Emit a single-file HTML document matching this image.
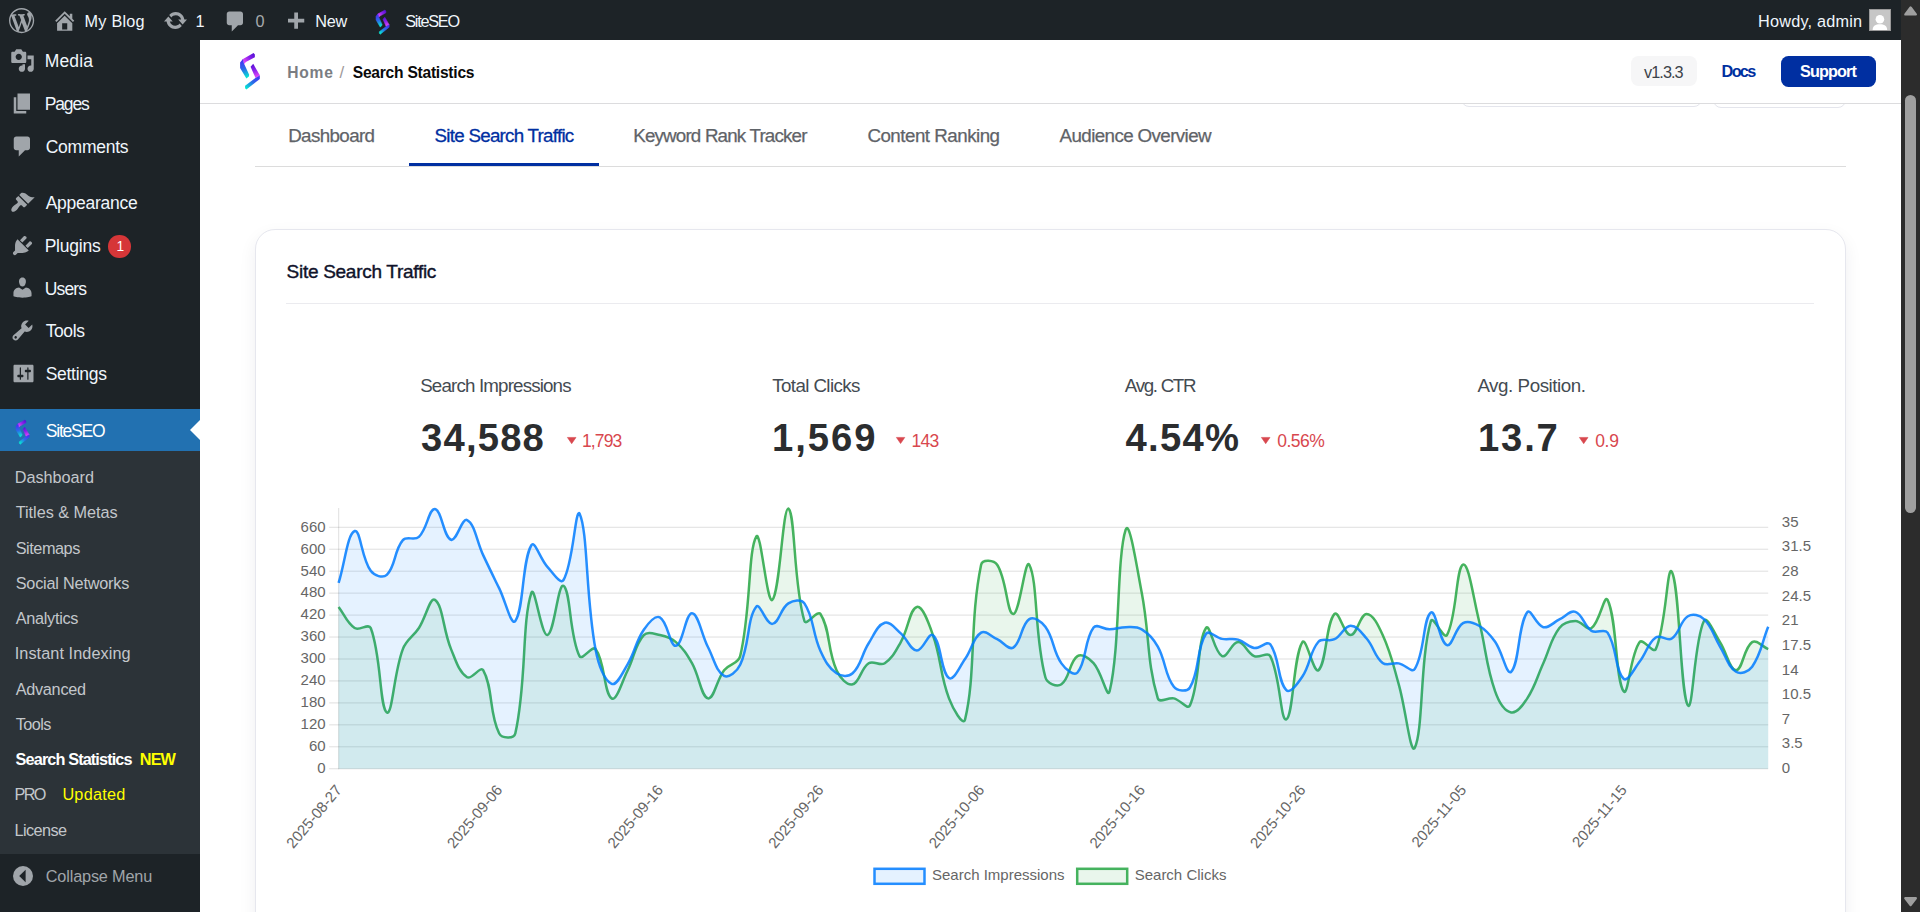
<!DOCTYPE html>
<html><head><meta charset="utf-8"><title>Search Statistics</title>
<style>
*{box-sizing:border-box}
html,body{margin:0;padding:0;width:1920px;height:912px;overflow:hidden;background:#fff;font-family:"Liberation Sans", sans-serif;}
.t{position:absolute;white-space:nowrap;display:block}
.abs{position:absolute}
svg{position:absolute;overflow:visible}
</style></head>
<body>
<div id="wp-chrome">
<div class="abs" style="left:0;top:0;width:1920px;height:40px;background:#1d2327"></div>
<div class="abs" style="left:0;top:40px;width:200px;height:872px;background:#1d2327"></div>
<div class="abs" style="left:0;top:408.8px;width:200px;height:42.2px;background:#2271b1"></div>
<div class="abs" style="left:0;top:451px;width:200px;height:403px;background:#2c3338"></div>
<svg style="left:190px;top:420px" width="10" height="20" viewBox="0 0 10 20"><path d="M10 0 L0 10 L10 20 Z" fill="#fff"/></svg>
<svg style="left:8.80px;top:8.00px" width="25.20" height="25.20" viewBox="0 0 20 20"><path fill="#a0a5aa" d="M20 10c0-5.51-4.49-10-10-10C4.48 0 0 4.49 0 10c0 5.52 4.48 10 10 10 5.51 0 10-4.48 10-10zM7.78 15.37L4.37 6.22c.55-.02 1.17-.08 1.17-.08.5-.06.44-1.13-.06-1.11 0 0-1.45.11-2.37.11-.18 0-.37 0-.58-.01C4.12 2.69 6.87 1.11 10 1.11c2.33 0 4.45.87 6.05 2.34-.68-.11-1.65.39-1.65 1.58 0 .74.45 1.36.9 2.1.35.61.55 1.36.55 2.46 0 1.49-1.4 5-1.4 5l-3.03-8.37c.54-.02.82-.17.82-.17.5-.05.44-1.25-.06-1.22 0 0-1.44.12-2.38.12-.87 0-2.33-.12-2.33-.12-.5-.03-.56 1.2-.06 1.22l.92.08 1.26 3.41zM17.41 10c.24-.64.74-1.87.43-4.25.7 1.29 1.05 2.71 1.05 4.25 0 3.29-1.73 6.24-4.4 7.78.97-2.59 1.94-5.2 2.92-7.78zM6.1 18.09C3.12 16.65 1.11 13.53 1.11 10c0-1.3.23-2.48.72-3.59C3.25 10.3 4.67 14.2 6.1 18.09zm4.03-6.63l2.58 6.98c-.86.29-1.76.45-2.71.45-.79 0-1.57-.11-2.29-.33.81-2.38 1.62-4.74 2.42-7.1z"/></svg>
<svg style="left:52.00px;top:7.70px" width="25.40" height="25.40" viewBox="0 0 20 20"><path fill="#a0a5aa" d="M16 8.5l1.53 1.53-1.06 1.06L10 4.62l-6.47 6.47-1.06-1.06L10 2.5l4 4v-2h2v4zm-6-2.46l6 5.99V18H4v-5.970zM12 17v-5H8v5h4z"/></svg>
<span class="t" style="left:84.60px;top:13.00px;font-size:16.25px;line-height:16.25px;font-weight:400;color:#f0f6fc;letter-spacing:0.223px;">My Blog</span>
<svg style="left:162.50px;top:7.80px" width="25.00" height="25.00" viewBox="0 0 20 20"><path fill="#a0a5aa" d="M10.2 3.28c3.53 0 6.43 2.61 6.92 6h2.08l-3.5 4-3.5-4h2.32c-.45-1.97-2.21-3.45-4.32-3.45-1.45 0-2.73.71-3.54 1.78L4.95 5.66C6.23 4.2 8.11 3.28 10.2 3.28zm-.4 13.44c-3.52 0-6.43-2.61-6.92-6H.8l3.5-4c1.17 1.33 2.33 2.67 3.5 4H5.48c.45 1.97 2.21 3.45 4.32 3.45 1.45 0 2.73-.71 3.54-1.78l1.71 1.95c-1.28 1.46-3.15 2.38-5.25 2.38z"/></svg>
<span class="t" style="left:195.50px;top:13.00px;font-size:16.25px;line-height:16.25px;font-weight:400;color:#f0f6fc;letter-spacing:0.000px;">1</span>
<svg style="left:222.50px;top:9.00px" width="25.00" height="25.00" viewBox="0 0 20 20"><path fill="#a0a5aa" d="M5 2h9c1.1 0 2 .9 2 2v7c0 1.1-.9 2-2 2h-2l-5 5v-5H5c-1.1 0-2-.9-2-2V4c0-1.1.9-2 2-2z"/></svg>
<span class="t" style="left:255.60px;top:13.00px;font-size:16.25px;line-height:16.25px;font-weight:400;color:#a7aaad;letter-spacing:0.000px;">0</span>
<svg style="left:283.00px;top:10.10px" width="25.00" height="25.00" viewBox="0 0 20 20"><path fill="#a0a5aa" d="M17 7v3h-5v5H9v-5H4V7h5V2h3v5h5z"/></svg>
<span class="t" style="left:315.20px;top:13.00px;font-size:16.25px;line-height:16.25px;font-weight:400;color:#f0f6fc;letter-spacing:-0.186px;">New</span>
<svg style="left:375.80px;top:10.20px" width="13.21" height="24.30" viewBox="0 0 20 36.8"><defs><linearGradient id="lg1a" gradientUnits="userSpaceOnUse" x1="14.5" y1="1" x2="3.5" y2="10"><stop offset="0" stop-color="#5410d4"/><stop offset="0.45" stop-color="#8a22ec"/><stop offset="1" stop-color="#ee4cf8"/></linearGradient><linearGradient id="lg1b" gradientUnits="userSpaceOnUse" x1="1" y1="7" x2="7" y2="25"><stop offset="0" stop-color="#4a2af5"/><stop offset="0.5" stop-color="#2a6ce8"/><stop offset="1" stop-color="#04efd2"/></linearGradient><linearGradient id="lg1c" gradientUnits="userSpaceOnUse" x1="12" y1="11" x2="17.5" y2="25"><stop offset="0" stop-color="#5410d4"/><stop offset="0.45" stop-color="#8a22ec"/><stop offset="1" stop-color="#ee4cf8"/></linearGradient><linearGradient id="lg1d" gradientUnits="userSpaceOnUse" x1="19.5" y1="23" x2="6" y2="36"><stop offset="0" stop-color="#4a2af5"/><stop offset="0.5" stop-color="#2a6ce8"/><stop offset="1" stop-color="#04efd2"/></linearGradient></defs><path d="M13.6 0.1 L14.9 1.6 L14.9 4.3 L5.9 9 L4.2 11 L2.6 6.2 Z" fill="url(#lg1a)" stroke="url(#lg1a)" stroke-width="0.90" stroke-linejoin="round"/><path d="M2.9 5.9 L0.1 9.5 L0.1 15 L6.4 25.7 L8.9 23.5 L9.2 21.9 L4 10.6 Z" fill="url(#lg1b)" stroke="url(#lg1b)" stroke-width="0.90" stroke-linejoin="round"/><path d="M13.3 10.9 L10.6 13.9 L15.6 25.2 L19.9 22.9 L19.6 21.9 Z" fill="url(#lg1c)" stroke="url(#lg1c)" stroke-width="0.90" stroke-linejoin="round"/><path d="M19.9 22.6 L19.9 26 L6.4 36.7 L5.1 35.3 L5.1 32.8 L15.8 24.8 Z" fill="url(#lg1d)" stroke="url(#lg1d)" stroke-width="0.90" stroke-linejoin="round"/></svg>
<span class="t" style="left:405.30px;top:13.00px;font-size:16.25px;line-height:16.25px;font-weight:400;color:#f0f6fc;letter-spacing:-1.263px;">SiteSEO</span>
<span class="t" style="left:1758.00px;top:13.00px;font-size:16.25px;line-height:16.25px;font-weight:400;color:#f0f6fc;letter-spacing:0.208px;">Howdy, admin</span>
<div class="abs" style="left:1869px;top:9px;width:22px;height:22px;background:#c6c6c6;border:1px solid #9a9a9a"></div>
<svg style="left:1870px;top:10px" width="20" height="20" viewBox="0 0 20 20"><circle cx="9.9" cy="9.2" r="4.3" fill="#fff"/><path d="M2.6 20 C2.8 15.6 5.6 14.2 9.9 14.2 C14.2 14.2 17 15.6 17.2 20 Z" fill="#fff"/></svg>
<svg style="left:10.00px;top:47.70px" width="25.00" height="25.00" viewBox="0 0 20 20"><path fill="#a0a5aa" d="M13 11V4c0-.55-.45-1-1-1h-1.670L9 1H5L3.670 3H2c-.55 0-1 .45-1 1v7c0 .55.45 1 1 1h10c.55 0 1-.45 1-1zM7 4.500c1.380 0 2.500 1.120 2.500 2.500S8.380 9.500 7 9.500 4.500 8.380 4.500 7 5.620 4.500 7 4.500zM14 6h5v10.500c0 1.380-1.120 2.500-2.500 2.500S14 17.880 14 16.500s1.120-2.500 2.500-2.500c.17 0 .34.02.5.05V9h-3V6zm-4 8.050V13h2v3.500c0 1.380-1.120 2.500-2.500 2.500S7 17.880 7 16.500 8.120 14 9.500 14c.17 0 .34.02.5.05z"/></svg>
<span class="t" style="left:44.70px;top:53.00px;font-size:17.50px;line-height:17.50px;font-weight:400;color:#f0f6fc;letter-spacing:0.142px;">Media</span>
<svg style="left:10.00px;top:91.00px" width="25.00" height="25.00" viewBox="0 0 20 20"><path fill="#a0a5aa" d="M6 15V2h10v13H6zm-1 1h8v2H3V5h2v11z"/></svg>
<span class="t" style="left:44.70px;top:96.00px;font-size:17.50px;line-height:17.50px;font-weight:400;color:#f0f6fc;letter-spacing:-1.118px;">Pages</span>
<svg style="left:10.00px;top:133.50px" width="25.00" height="25.00" viewBox="0 0 20 20"><path fill="#a0a5aa" d="M5 2h9c1.1 0 2 .9 2 2v7c0 1.1-.9 2-2 2h-2l-5 5v-5H5c-1.1 0-2-.9-2-2V4c0-1.1.9-2 2-2z"/></svg>
<span class="t" style="left:45.70px;top:139.00px;font-size:17.50px;line-height:17.50px;font-weight:400;color:#f0f6fc;letter-spacing:-0.250px;">Comments</span>
<svg style="left:10.00px;top:189.60px" width="25.00" height="25.00" viewBox="0 0 20 20"><path fill="#a0a5aa" d="M14.48 11.06L7.41 3.99l1.5-1.5c.5-.56 2.3-.47 3.51.32 1.21.8 1.43 1.28 2.91 2.1 1.18.64 2.45 1.26 4.45.85zm-.71.71L6.7 4.7 4.93 6.47c-.39.39-.39 1.02 0 1.41l1.06 1.06c.39.39.39 1.03 0 1.42-.6.6-1.43 1.11-2.21 1.69-.35.26-.7.53-1.01.84C1.43 14.23.4 16.08 1.4 17.07c.99 1 2.84-.03 4.18-1.36.31-.31.58-.66.85-1.02.57-.78 1.08-1.61 1.69-2.21.39-.39 1.02-.39 1.41 0l1.06 1.06c.39.39 1.02.39 1.41 0z"/></svg>
<span class="t" style="left:45.70px;top:195.00px;font-size:17.50px;line-height:17.50px;font-weight:400;color:#f0f6fc;letter-spacing:-0.261px;">Appearance</span>
<svg style="left:10.00px;top:233.40px" width="25.00" height="25.00" viewBox="0 0 20 20"><path fill="#a0a5aa" d="M13.11 4.36L9.87 7.6 8 5.73l3.24-3.24c.35-.34 1.05-.2 1.56.32.52.51.66 1.21.31 1.55zm-8 1.77l.91-1.12 9.01 9.01-1.19.84c-.71.71-2.63 1.16-3.82 1.16H6.14L4.9 17.26c-.59.59-1.54.59-2.12 0-.59-.58-.59-1.53 0-2.12l1.24-1.24v-3.88c0-1.13.4-3.19 1.09-3.89zm7.26 3.97l3.24-3.24c.34-.35 1.04-.21 1.55.31.52.51.66 1.21.31 1.55l-3.24 3.250z"/></svg>
<span class="t" style="left:44.70px;top:238.00px;font-size:17.50px;line-height:17.50px;font-weight:400;color:#f0f6fc;letter-spacing:-0.241px;">Plugins</span>
<svg style="left:10.00px;top:274.90px" width="25.00" height="25.00" viewBox="0 0 20 20"><path fill="#a0a5aa" d="M10 9.25c-2.27 0-2.73-3.44-2.73-3.44C7 4.02 7.82 2 9.97 2c2.16 0 2.98 2.02 2.71 3.81 0 0-.41 3.44-2.68 3.44zm0 2.57L12.72 10c2.39 0 4.52 2.33 4.52 4.53v2.49s-3.65 1.13-7.24 1.13c-3.65 0-7.24-1.13-7.24-1.13v-2.49c0-2.25 1.94-4.48 4.47-4.48z"/></svg>
<span class="t" style="left:44.70px;top:281.00px;font-size:17.50px;line-height:17.50px;font-weight:400;color:#f0f6fc;letter-spacing:-0.837px;">Users</span>
<svg style="left:10.00px;top:317.90px" width="25.00" height="25.00" viewBox="0 0 20 20"><path fill="#a0a5aa" d="M16.68 9.77c-1.34 1.34-3.3 1.67-4.95.99l-5.41 6.52c-.99.99-2.59.99-3.58 0s-.99-2.59 0-3.57l6.52-5.42c-.68-1.65-.35-3.61.99-4.95 1.28-1.28 3.12-1.62 4.72-1.06l-2.89 2.89 2.82 2.82 2.86-2.87c.53 1.58.18 3.39-1.08 4.65zM3.81 16.21c.4.39 1.04.39 1.43 0 .4-.4.4-1.04 0-1.43-.39-.4-1.03-.4-1.43 0-.39.39-.39 1.03 0 1.43z"/></svg>
<span class="t" style="left:45.70px;top:323.00px;font-size:17.50px;line-height:17.50px;font-weight:400;color:#f0f6fc;letter-spacing:-0.401px;">Tools</span>
<svg style="left:10.70px;top:361.00px" width="25.00" height="25.00" viewBox="0 0 20 20"><path fill="#a0a5aa" d="M18 16V4c0-.55-.45-1-1-1H3c-.55 0-1 .45-1 1v12c0 .55.45 1 1 1h14c.55 0 1-.45 1-1zM8 11h1c.55 0 1 .45 1 1s-.45 1-1 1H8v1.500c0 .28-.22.5-.5.5s-.5-.22-.5-.5V13H6c-.55 0-1-.45-1-1s.45-1 1-1h1V5.500c0-.28.22-.5.5-.5s.5.22.5.5V11zm5-2h-1c-.55 0-1-.45-1-1s.45-1 1-1h1V5.500c0-.28.22-.5.5-.5s.5.22.5.5V7h1c.55 0 1 .45 1 1s-.45 1-1 1h-1v5.500c0 .28-.22.5-.5.5s-.5-.22-.5-.5V9z"/></svg>
<span class="t" style="left:45.70px;top:366.00px;font-size:17.50px;line-height:17.50px;font-weight:400;color:#f0f6fc;letter-spacing:-0.283px;">Settings</span>
<div class="abs" style="left:108px;top:235.4px;width:22.5px;height:22.5px;border-radius:50%;background:#d63638"></div>
<span class="t" style="left:116.50px;top:240.00px;font-size:13.75px;line-height:13.75px;font-weight:400;color:#fff;letter-spacing:0.000px;">1</span>
<svg style="left:16.40px;top:419.80px" width="13.21" height="24.30" viewBox="0 0 20 36.8"><defs><linearGradient id="lg2a" gradientUnits="userSpaceOnUse" x1="14.5" y1="1" x2="3.5" y2="10"><stop offset="0" stop-color="#5410d4"/><stop offset="0.45" stop-color="#8a22ec"/><stop offset="1" stop-color="#ee4cf8"/></linearGradient><linearGradient id="lg2b" gradientUnits="userSpaceOnUse" x1="1" y1="7" x2="7" y2="25"><stop offset="0" stop-color="#4a2af5"/><stop offset="0.5" stop-color="#2a6ce8"/><stop offset="1" stop-color="#04efd2"/></linearGradient><linearGradient id="lg2c" gradientUnits="userSpaceOnUse" x1="12" y1="11" x2="17.5" y2="25"><stop offset="0" stop-color="#5410d4"/><stop offset="0.45" stop-color="#8a22ec"/><stop offset="1" stop-color="#ee4cf8"/></linearGradient><linearGradient id="lg2d" gradientUnits="userSpaceOnUse" x1="19.5" y1="23" x2="6" y2="36"><stop offset="0" stop-color="#4a2af5"/><stop offset="0.5" stop-color="#2a6ce8"/><stop offset="1" stop-color="#04efd2"/></linearGradient></defs><path d="M13.6 0.1 L14.9 1.6 L14.9 4.3 L5.9 9 L4.2 11 L2.6 6.2 Z" fill="url(#lg2a)" stroke="url(#lg2a)" stroke-width="0.90" stroke-linejoin="round"/><path d="M2.9 5.9 L0.1 9.5 L0.1 15 L6.4 25.7 L8.9 23.5 L9.2 21.9 L4 10.6 Z" fill="url(#lg2b)" stroke="url(#lg2b)" stroke-width="0.90" stroke-linejoin="round"/><path d="M13.3 10.9 L10.6 13.9 L15.6 25.2 L19.9 22.9 L19.6 21.9 Z" fill="url(#lg2c)" stroke="url(#lg2c)" stroke-width="0.90" stroke-linejoin="round"/><path d="M19.9 22.6 L19.9 26 L6.4 36.7 L5.1 35.3 L5.1 32.8 L15.8 24.8 Z" fill="url(#lg2d)" stroke="url(#lg2d)" stroke-width="0.90" stroke-linejoin="round"/></svg>
<span class="t" style="left:45.80px;top:423.00px;font-size:17.50px;line-height:17.50px;font-weight:400;color:#fff;letter-spacing:-1.217px;">SiteSEO</span>
<span class="t" style="left:14.70px;top:469.00px;font-size:16.25px;line-height:16.25px;font-weight:400;color:#c3c7cb;letter-spacing:-0.020px;">Dashboard</span>
<span class="t" style="left:15.70px;top:504.00px;font-size:16.25px;line-height:16.25px;font-weight:400;color:#c3c7cb;letter-spacing:-0.024px;">Titles &amp; Metas</span>
<span class="t" style="left:15.70px;top:540.00px;font-size:16.25px;line-height:16.25px;font-weight:400;color:#c3c7cb;letter-spacing:-0.445px;">Sitemaps</span>
<span class="t" style="left:15.70px;top:575.00px;font-size:16.25px;line-height:16.25px;font-weight:400;color:#c3c7cb;letter-spacing:-0.205px;">Social Networks</span>
<span class="t" style="left:15.70px;top:610.00px;font-size:16.25px;line-height:16.25px;font-weight:400;color:#c3c7cb;letter-spacing:-0.287px;">Analytics</span>
<span class="t" style="left:14.70px;top:645.00px;font-size:16.25px;line-height:16.25px;font-weight:400;color:#c3c7cb;letter-spacing:0.074px;">Instant Indexing</span>
<span class="t" style="left:15.70px;top:681.00px;font-size:16.25px;line-height:16.25px;font-weight:400;color:#c3c7cb;letter-spacing:-0.277px;">Advanced</span>
<span class="t" style="left:15.70px;top:716.00px;font-size:16.25px;line-height:16.25px;font-weight:400;color:#c3c7cb;letter-spacing:-0.578px;">Tools</span>
<span class="t" style="left:15.60px;top:751.00px;font-size:16.25px;line-height:16.25px;font-weight:700;color:#fff;letter-spacing:-0.877px;">Search Statistics</span>
<span class="t" style="left:139.80px;top:751.00px;font-size:16.25px;line-height:16.25px;font-weight:700;color:#ffff00;letter-spacing:-0.887px;">NEW</span>
<span class="t" style="left:14.60px;top:786.00px;font-size:16.25px;line-height:16.25px;font-weight:400;color:#c3c7cb;letter-spacing:-1.737px;">PRO</span>
<span class="t" style="left:62.40px;top:786.00px;font-size:16.25px;line-height:16.25px;font-weight:400;color:#ffff00;letter-spacing:0.233px;">Updated</span>
<span class="t" style="left:14.60px;top:822.00px;font-size:16.25px;line-height:16.25px;font-weight:400;color:#c3c7cb;letter-spacing:-0.595px;">License</span>
<svg style="left:12.5px;top:865.7px" width="20" height="20" viewBox="0 0 20 20"><circle cx="10" cy="10" r="10" fill="#a0a5aa"/><path d="M12.6 3.8 L6.2 10 L12.6 16.2 Z" fill="#1d2327"/></svg>
<span class="t" style="left:45.80px;top:868.00px;font-size:16.25px;line-height:16.25px;font-weight:400;color:#a0a5aa;letter-spacing:-0.163px;">Collapse Menu</span>
<div class="abs" style="left:1901px;top:0;width:19px;height:912px;background:#2c2c2c"></div>
<div class="abs" style="left:1905px;top:95px;width:11px;height:418px;border-radius:5.5px;background:#9f9f9f"></div>
<svg style="left:1901px;top:0" width="19" height="912" viewBox="0 0 19 912"><path d="M9.6 7.6 L14.8 14.4 L4.4 14.4 Z" fill="#9f9f9f" stroke="#9f9f9f" stroke-width="2.4" stroke-linejoin="round"/><path d="M9.6 905 L14.8 898.2 L4.4 898.2 Z" fill="#9f9f9f" stroke="#9f9f9f" stroke-width="2.4" stroke-linejoin="round"/></svg>
</div>
<main id="siteseo-main">
<div class="abs" style="left:1461px;top:80px;width:241px;height:27px;border:1.25px solid #e4e5ec;border-radius:8px;background:#fff"></div>
<div class="abs" style="left:1713px;top:80px;width:132.5px;height:28px;border:1.25px solid #e4e5ec;border-radius:8px;background:#fff"></div>
<div class="abs" style="left:200px;top:40px;width:1701px;height:63.8px;background:#fff;border-bottom:1.25px solid #dcdcde"></div>
<svg style="left:240.10px;top:53.10px" width="19.95" height="36.70" viewBox="0 0 20 36.8"><defs><linearGradient id="lg3a" gradientUnits="userSpaceOnUse" x1="14.5" y1="1" x2="3.5" y2="10"><stop offset="0" stop-color="#5410d4"/><stop offset="0.45" stop-color="#8a22ec"/><stop offset="1" stop-color="#ee4cf8"/></linearGradient><linearGradient id="lg3b" gradientUnits="userSpaceOnUse" x1="1" y1="7" x2="7" y2="25"><stop offset="0" stop-color="#4a2af5"/><stop offset="0.5" stop-color="#2a6ce8"/><stop offset="1" stop-color="#04efd2"/></linearGradient><linearGradient id="lg3c" gradientUnits="userSpaceOnUse" x1="12" y1="11" x2="17.5" y2="25"><stop offset="0" stop-color="#5410d4"/><stop offset="0.45" stop-color="#8a22ec"/><stop offset="1" stop-color="#ee4cf8"/></linearGradient><linearGradient id="lg3d" gradientUnits="userSpaceOnUse" x1="19.5" y1="23" x2="6" y2="36"><stop offset="0" stop-color="#4a2af5"/><stop offset="0.5" stop-color="#2a6ce8"/><stop offset="1" stop-color="#04efd2"/></linearGradient></defs><path d="M13.6 0.1 L14.9 1.6 L14.9 4.3 L5.9 9 L4.2 11 L2.6 6.2 Z" fill="url(#lg3a)" stroke="url(#lg3a)" stroke-width="0.00" stroke-linejoin="round"/><path d="M2.9 5.9 L0.1 9.5 L0.1 15 L6.4 25.7 L8.9 23.5 L9.2 21.9 L4 10.6 Z" fill="url(#lg3b)" stroke="url(#lg3b)" stroke-width="0.00" stroke-linejoin="round"/><path d="M13.3 10.9 L10.6 13.9 L15.6 25.2 L19.9 22.9 L19.6 21.9 Z" fill="url(#lg3c)" stroke="url(#lg3c)" stroke-width="0.00" stroke-linejoin="round"/><path d="M19.9 22.6 L19.9 26 L6.4 36.7 L5.1 35.3 L5.1 32.8 L15.8 24.8 Z" fill="url(#lg3d)" stroke="url(#lg3d)" stroke-width="0.00" stroke-linejoin="round"/></svg>
<span class="t" style="left:287.30px;top:65.00px;font-size:15.60px;line-height:15.60px;font-weight:700;color:#7a7d82;letter-spacing:0.749px;">Home</span>
<span class="t" style="left:339.60px;top:64.00px;font-size:17.00px;line-height:17.00px;font-weight:400;color:#a09a9a;letter-spacing:0.000px;">/</span>
<span class="t" style="left:352.80px;top:65.00px;font-size:15.60px;line-height:15.60px;font-weight:700;color:#0a0a0a;letter-spacing:-0.250px;">Search Statistics</span>
<div class="abs" style="left:1631.2px;top:56.2px;width:66px;height:29.8px;border-radius:7.5px;background:#f6f6f7"></div>
<span class="t" style="left:1644.00px;top:64.00px;font-size:16.25px;line-height:16.25px;font-weight:400;color:#3c434a;letter-spacing:-0.926px;">v1.3.3</span>
<span class="t" style="left:1721.60px;top:63.00px;font-size:16.25px;line-height:16.25px;font-weight:700;color:#00309f;letter-spacing:-1.700px;">Docs</span>
<div class="abs" style="left:1781px;top:56.2px;width:95px;height:30.5px;border-radius:7.5px;background:#002fa1"></div>
<span class="t" style="left:1800.00px;top:63.00px;font-size:16.25px;line-height:16.25px;font-weight:700;color:#fff;letter-spacing:-0.911px;">Support</span>
<div class="abs" style="left:255px;top:166px;width:1591px;height:1px;background:#dcdcdc"></div>
<div class="abs" style="left:409px;top:163px;width:189.6px;height:3px;background:#002fa1"></div>
<span class="t" style="left:288.20px;top:127.00px;font-size:18.75px;line-height:18.75px;font-weight:400;color:#5f6368;letter-spacing:-0.612px;-webkit-text-stroke:0.25px #5f6368;">Dashboard</span>
<span class="t" style="left:434.60px;top:127.00px;font-size:18.75px;line-height:18.75px;font-weight:400;color:#002fa1;letter-spacing:-0.734px;-webkit-text-stroke:0.3px #002fa1;">Site Search Traffic</span>
<span class="t" style="left:633.20px;top:127.00px;font-size:18.75px;line-height:18.75px;font-weight:400;color:#5f6368;letter-spacing:-0.808px;-webkit-text-stroke:0.25px #5f6368;">Keyword Rank Tracker</span>
<span class="t" style="left:867.40px;top:127.00px;font-size:18.75px;line-height:18.75px;font-weight:400;color:#5f6368;letter-spacing:-0.503px;-webkit-text-stroke:0.25px #5f6368;">Content Ranking</span>
<span class="t" style="left:1059.60px;top:127.00px;font-size:18.75px;line-height:18.75px;font-weight:400;color:#5f6368;letter-spacing:-0.600px;-webkit-text-stroke:0.25px #5f6368;">Audience Overview</span>
<div class="abs" style="left:255.4px;top:229.4px;width:1590.6px;height:720px;border:1.25px solid #e6e7ee;border-radius:20px;background:#fff;box-shadow:0 7px 18px rgba(30,30,60,0.065)"></div>
<span class="t" style="left:286.60px;top:262.00px;font-size:19.00px;line-height:19.00px;font-weight:400;color:#10132a;letter-spacing:-0.285px;-webkit-text-stroke:0.4px #10132a;">Site Search Traffic</span>
<div class="abs" style="left:286px;top:303px;width:1528px;height:1px;background:#ebebef"></div>
<span class="t" style="left:420.20px;top:377.00px;font-size:18.75px;line-height:18.75px;font-weight:400;color:#444b52;letter-spacing:-0.842px;">Search Impressions</span>
<span class="t" style="left:421.00px;top:419.00px;font-size:38.20px;line-height:38.20px;font-weight:700;color:#2b2d2f;letter-spacing:1.208px;">34,588</span>
<svg style="left:566.80px;top:436.90px" width="9.40" height="7.05" viewBox="0 0 10 7.2"><path d="M0.4 0.3 L9.6 0.3 L5 7 Z" fill="#d8474e" stroke="#d8474e" stroke-width="0.6" stroke-linejoin="round"/></svg>
<span class="t" style="left:582.00px;top:433.00px;font-size:17.50px;line-height:17.50px;font-weight:400;color:#d8474e;letter-spacing:-0.890px;">1,793</span>
<span class="t" style="left:772.20px;top:377.00px;font-size:18.75px;line-height:18.75px;font-weight:400;color:#444b52;letter-spacing:-0.603px;">Total Clicks</span>
<span class="t" style="left:772.00px;top:419.00px;font-size:38.20px;line-height:38.20px;font-weight:700;color:#2b2d2f;letter-spacing:1.969px;">1,569</span>
<svg style="left:896.40px;top:436.90px" width="9.20" height="6.90" viewBox="0 0 10 7.2"><path d="M0.4 0.3 L9.6 0.3 L5 7 Z" fill="#d8474e" stroke="#d8474e" stroke-width="0.6" stroke-linejoin="round"/></svg>
<span class="t" style="left:911.60px;top:433.00px;font-size:17.50px;line-height:17.50px;font-weight:400;color:#d8474e;letter-spacing:-0.733px;">143</span>
<span class="t" style="left:1124.80px;top:377.00px;font-size:18.75px;line-height:18.75px;font-weight:400;color:#444b52;letter-spacing:-1.312px;">Avg. CTR</span>
<span class="t" style="left:1125.40px;top:419.00px;font-size:38.20px;line-height:38.20px;font-weight:700;color:#2b2d2f;letter-spacing:1.319px;">4.54%</span>
<svg style="left:1260.60px;top:436.90px" width="9.40" height="7.05" viewBox="0 0 10 7.2"><path d="M0.4 0.3 L9.6 0.3 L5 7 Z" fill="#d8474e" stroke="#d8474e" stroke-width="0.6" stroke-linejoin="round"/></svg>
<span class="t" style="left:1277.20px;top:433.00px;font-size:17.50px;line-height:17.50px;font-weight:400;color:#d8474e;letter-spacing:-0.515px;">0.56%</span>
<span class="t" style="left:1477.40px;top:377.00px;font-size:18.75px;line-height:18.75px;font-weight:400;color:#444b52;letter-spacing:-0.438px;">Avg. Position.</span>
<span class="t" style="left:1478.00px;top:419.00px;font-size:38.20px;line-height:38.20px;font-weight:700;color:#2b2d2f;letter-spacing:1.838px;">13.7</span>
<svg style="left:1578.80px;top:436.90px" width="9.40" height="7.05" viewBox="0 0 10 7.2"><path d="M0.4 0.3 L9.6 0.3 L5 7 Z" fill="#d8474e" stroke="#d8474e" stroke-width="0.6" stroke-linejoin="round"/></svg>
<span class="t" style="left:1595.20px;top:433.00px;font-size:17.50px;line-height:17.50px;font-weight:400;color:#d8474e;letter-spacing:-0.297px;">0.9</span>
</main>
<section id="traffic-chart">
<svg style="left:0;top:0" width="1920" height="912" viewBox="0 0 1920 912" font-family='"Liberation Sans", sans-serif' font-size="15" fill="#666">
<rect x="329.2" y="768.08" width="1439.00" height="1.25" fill="rgba(0,0,0,0.1)"/>
<text x="325.6" y="773.00" text-anchor="end">0</text>
<rect x="329.2" y="746.13" width="1439.00" height="1.25" fill="rgba(0,0,0,0.1)"/>
<text x="325.6" y="751.06" text-anchor="end">60</text>
<rect x="329.2" y="724.19" width="1439.00" height="1.25" fill="rgba(0,0,0,0.1)"/>
<text x="325.6" y="729.12" text-anchor="end">120</text>
<rect x="329.2" y="702.25" width="1439.00" height="1.25" fill="rgba(0,0,0,0.1)"/>
<text x="325.6" y="707.17" text-anchor="end">180</text>
<rect x="329.2" y="680.31" width="1439.00" height="1.25" fill="rgba(0,0,0,0.1)"/>
<text x="325.6" y="685.23" text-anchor="end">240</text>
<rect x="329.2" y="658.37" width="1439.00" height="1.25" fill="rgba(0,0,0,0.1)"/>
<text x="325.6" y="663.29" text-anchor="end">300</text>
<rect x="329.2" y="636.42" width="1439.00" height="1.25" fill="rgba(0,0,0,0.1)"/>
<text x="325.6" y="641.35" text-anchor="end">360</text>
<rect x="329.2" y="614.48" width="1439.00" height="1.25" fill="rgba(0,0,0,0.1)"/>
<text x="325.6" y="619.41" text-anchor="end">420</text>
<rect x="329.2" y="592.54" width="1439.00" height="1.25" fill="rgba(0,0,0,0.1)"/>
<text x="325.6" y="597.46" text-anchor="end">480</text>
<rect x="329.2" y="570.60" width="1439.00" height="1.25" fill="rgba(0,0,0,0.1)"/>
<text x="325.6" y="575.52" text-anchor="end">540</text>
<rect x="329.2" y="548.65" width="1439.00" height="1.25" fill="rgba(0,0,0,0.1)"/>
<text x="325.6" y="553.58" text-anchor="end">600</text>
<rect x="329.2" y="526.71" width="1439.00" height="1.25" fill="rgba(0,0,0,0.1)"/>
<text x="325.6" y="531.64" text-anchor="end">660</text>
<rect x="337.98" y="508.00" width="1.25" height="261.30" fill="rgba(0,0,0,0.1)"/>
<text x="1781.8" y="773.00">0</text>
<text x="1781.8" y="748.38">3.5</text>
<text x="1781.8" y="723.76">7</text>
<text x="1781.8" y="699.14">10.5</text>
<text x="1781.8" y="674.52">14</text>
<text x="1781.8" y="649.90">17.5</text>
<text x="1781.8" y="625.29">21</text>
<text x="1781.8" y="600.67">24.5</text>
<text x="1781.8" y="576.05">28</text>
<text x="1781.8" y="551.43">31.5</text>
<text x="1781.8" y="526.81">35</text>
<path d="M338.60 606.92 C345.03 615.36 346.66 622.76 354.66 628.02 C359.51 631.20 368.70 622.70 370.73 628.02 C381.55 656.47 379.49 707.63 386.79 712.43 C392.34 716.07 393.71 673.13 402.85 649.12 C406.56 639.37 413.13 636.89 418.91 628.02 C425.98 617.19 430.03 596.64 434.98 599.88 C442.88 605.08 443.14 630.08 451.04 649.12 C455.99 661.03 458.77 671.78 467.10 677.26 C471.62 680.22 480.45 665.46 483.17 670.22 C493.30 687.97 488.92 713.21 499.23 733.53 C501.77 738.53 513.98 739.26 515.29 733.53 C526.83 682.99 521.61 622.72 531.36 592.85 C534.46 583.33 541.43 636.36 547.42 635.05 C554.28 633.55 558.11 582.29 563.48 585.82 C570.96 590.73 569.21 635.78 579.54 656.16 C582.06 661.11 592.36 644.85 595.61 649.12 C605.21 661.73 603.76 693.17 611.67 698.36 C616.61 701.61 621.87 681.77 627.73 670.22 C634.72 656.45 634.72 644.99 643.80 635.05 C647.57 630.92 653.71 633.71 659.86 635.05 C666.57 636.52 670.81 637.61 675.92 642.09 C683.66 648.86 686.76 654.03 691.98 663.19 C699.61 676.54 701.06 696.83 708.05 698.36 C713.91 699.64 716.36 680.40 724.11 670.22 C729.21 663.52 738.24 664.19 740.17 656.16 C751.09 610.74 747.90 551.18 756.24 536.58 C760.75 528.67 766.99 604.53 772.30 599.88 C779.84 593.28 782.59 508.00 788.36 508.44 C795.44 513.09 793.29 584.42 804.42 620.99 C806.14 626.63 817.52 609.41 820.49 613.95 C830.38 629.11 827.14 649.61 836.55 670.22 C839.99 677.75 846.88 685.55 852.61 684.29 C859.73 682.73 860.67 668.45 868.68 663.19 C873.52 660.01 879.89 666.37 884.74 663.19 C892.74 657.93 895.57 651.25 900.80 642.09 C908.42 628.74 909.87 608.45 916.87 606.92 C922.72 605.64 928.67 622.93 932.93 635.05 C941.52 659.50 939.85 674.35 948.99 698.36 C952.70 708.11 963.18 727.25 965.05 719.46 C976.03 673.79 969.47 620.82 981.12 564.71 C982.32 558.92 994.14 560.05 997.18 564.71 C1006.99 579.75 1006.82 613.95 1013.24 613.95 C1019.67 613.95 1025.28 556.79 1029.31 564.71 C1038.13 582.11 1034.24 635.82 1045.37 677.26 C1047.09 683.65 1056.92 687.26 1061.43 684.29 C1069.77 678.82 1069.16 661.63 1077.49 656.16 C1082.01 653.19 1089.04 658.25 1093.56 663.19 C1101.89 672.32 1107.48 700.21 1109.62 691.33 C1120.34 646.75 1116.52 557.65 1125.68 529.54 C1129.37 518.25 1136.87 567.21 1141.75 592.85 C1149.72 634.74 1146.64 661.68 1157.81 698.36 C1159.49 703.88 1167.73 697.01 1173.87 698.36 C1180.58 699.83 1187.60 710.50 1189.93 705.39 C1200.45 682.37 1196.88 641.99 1206.00 628.02 C1209.73 622.29 1214.32 652.76 1222.06 656.16 C1227.17 658.39 1231.70 642.09 1238.12 642.09 C1244.55 642.09 1246.85 652.94 1254.19 656.16 C1259.70 658.57 1267.71 651.16 1270.25 656.16 C1280.56 676.48 1280.50 722.01 1286.31 719.46 C1293.35 716.38 1293.26 656.06 1302.38 642.09 C1306.11 636.36 1313.86 674.23 1318.44 670.22 C1326.71 662.98 1325.66 623.63 1334.50 613.95 C1338.51 609.56 1344.14 635.05 1350.56 635.05 C1356.99 635.05 1360.20 613.95 1366.63 613.95 C1373.05 613.95 1378.34 625.53 1382.69 635.05 C1391.19 653.66 1393.07 664.38 1398.75 684.29 C1405.92 709.40 1410.47 756.17 1414.82 747.60 C1423.32 730.85 1419.87 659.55 1430.88 620.99 C1432.72 614.53 1444.01 640.19 1446.94 635.05 C1456.86 617.69 1455.91 567.82 1463.00 564.71 C1468.76 562.19 1473.31 598.31 1479.07 620.99 C1486.16 648.95 1485.73 664.58 1495.13 691.33 C1498.58 701.16 1504.07 710.87 1511.19 712.43 C1516.92 713.68 1522.68 705.37 1527.26 698.36 C1535.53 685.67 1536.89 677.26 1543.32 663.19 C1549.74 649.12 1550.54 639.63 1559.38 628.02 C1563.39 622.75 1569.02 620.99 1575.44 620.99 C1581.87 620.99 1587.00 630.98 1591.51 628.02 C1599.85 622.54 1604.25 593.33 1607.57 599.88 C1617.10 618.66 1615.38 680.49 1623.63 691.33 C1628.24 697.37 1630.10 654.70 1639.70 642.09 C1642.95 637.82 1653.43 654.23 1655.76 649.12 C1666.28 626.10 1667.07 563.42 1671.82 571.75 C1679.92 585.93 1680.04 693.37 1687.89 705.39 C1692.89 713.07 1694.13 640.34 1703.95 620.99 C1706.98 615.01 1714.23 633.22 1720.01 642.09 C1727.08 652.92 1729.65 670.22 1736.07 670.22 C1742.50 670.22 1743.80 647.56 1752.14 642.09 C1756.65 639.12 1761.77 646.31 1768.20 649.12 L1768.20 768.70 L338.60 768.70 Z" fill="rgba(40,167,69,0.1)"/>
<path d="M338.60 606.92 C345.03 615.36 346.66 622.76 354.66 628.02 C359.51 631.20 368.70 622.70 370.73 628.02 C381.55 656.47 379.49 707.63 386.79 712.43 C392.34 716.07 393.71 673.13 402.85 649.12 C406.56 639.37 413.13 636.89 418.91 628.02 C425.98 617.19 430.03 596.64 434.98 599.88 C442.88 605.08 443.14 630.08 451.04 649.12 C455.99 661.03 458.77 671.78 467.10 677.26 C471.62 680.22 480.45 665.46 483.17 670.22 C493.30 687.97 488.92 713.21 499.23 733.53 C501.77 738.53 513.98 739.26 515.29 733.53 C526.83 682.99 521.61 622.72 531.36 592.85 C534.46 583.33 541.43 636.36 547.42 635.05 C554.28 633.55 558.11 582.29 563.48 585.82 C570.96 590.73 569.21 635.78 579.54 656.16 C582.06 661.11 592.36 644.85 595.61 649.12 C605.21 661.73 603.76 693.17 611.67 698.36 C616.61 701.61 621.87 681.77 627.73 670.22 C634.72 656.45 634.72 644.99 643.80 635.05 C647.57 630.92 653.71 633.71 659.86 635.05 C666.57 636.52 670.81 637.61 675.92 642.09 C683.66 648.86 686.76 654.03 691.98 663.19 C699.61 676.54 701.06 696.83 708.05 698.36 C713.91 699.64 716.36 680.40 724.11 670.22 C729.21 663.52 738.24 664.19 740.17 656.16 C751.09 610.74 747.90 551.18 756.24 536.58 C760.75 528.67 766.99 604.53 772.30 599.88 C779.84 593.28 782.59 508.00 788.36 508.44 C795.44 513.09 793.29 584.42 804.42 620.99 C806.14 626.63 817.52 609.41 820.49 613.95 C830.38 629.11 827.14 649.61 836.55 670.22 C839.99 677.75 846.88 685.55 852.61 684.29 C859.73 682.73 860.67 668.45 868.68 663.19 C873.52 660.01 879.89 666.37 884.74 663.19 C892.74 657.93 895.57 651.25 900.80 642.09 C908.42 628.74 909.87 608.45 916.87 606.92 C922.72 605.64 928.67 622.93 932.93 635.05 C941.52 659.50 939.85 674.35 948.99 698.36 C952.70 708.11 963.18 727.25 965.05 719.46 C976.03 673.79 969.47 620.82 981.12 564.71 C982.32 558.92 994.14 560.05 997.18 564.71 C1006.99 579.75 1006.82 613.95 1013.24 613.95 C1019.67 613.95 1025.28 556.79 1029.31 564.71 C1038.13 582.11 1034.24 635.82 1045.37 677.26 C1047.09 683.65 1056.92 687.26 1061.43 684.29 C1069.77 678.82 1069.16 661.63 1077.49 656.16 C1082.01 653.19 1089.04 658.25 1093.56 663.19 C1101.89 672.32 1107.48 700.21 1109.62 691.33 C1120.34 646.75 1116.52 557.65 1125.68 529.54 C1129.37 518.25 1136.87 567.21 1141.75 592.85 C1149.72 634.74 1146.64 661.68 1157.81 698.36 C1159.49 703.88 1167.73 697.01 1173.87 698.36 C1180.58 699.83 1187.60 710.50 1189.93 705.39 C1200.45 682.37 1196.88 641.99 1206.00 628.02 C1209.73 622.29 1214.32 652.76 1222.06 656.16 C1227.17 658.39 1231.70 642.09 1238.12 642.09 C1244.55 642.09 1246.85 652.94 1254.19 656.16 C1259.70 658.57 1267.71 651.16 1270.25 656.16 C1280.56 676.48 1280.50 722.01 1286.31 719.46 C1293.35 716.38 1293.26 656.06 1302.38 642.09 C1306.11 636.36 1313.86 674.23 1318.44 670.22 C1326.71 662.98 1325.66 623.63 1334.50 613.95 C1338.51 609.56 1344.14 635.05 1350.56 635.05 C1356.99 635.05 1360.20 613.95 1366.63 613.95 C1373.05 613.95 1378.34 625.53 1382.69 635.05 C1391.19 653.66 1393.07 664.38 1398.75 684.29 C1405.92 709.40 1410.47 756.17 1414.82 747.60 C1423.32 730.85 1419.87 659.55 1430.88 620.99 C1432.72 614.53 1444.01 640.19 1446.94 635.05 C1456.86 617.69 1455.91 567.82 1463.00 564.71 C1468.76 562.19 1473.31 598.31 1479.07 620.99 C1486.16 648.95 1485.73 664.58 1495.13 691.33 C1498.58 701.16 1504.07 710.87 1511.19 712.43 C1516.92 713.68 1522.68 705.37 1527.26 698.36 C1535.53 685.67 1536.89 677.26 1543.32 663.19 C1549.74 649.12 1550.54 639.63 1559.38 628.02 C1563.39 622.75 1569.02 620.99 1575.44 620.99 C1581.87 620.99 1587.00 630.98 1591.51 628.02 C1599.85 622.54 1604.25 593.33 1607.57 599.88 C1617.10 618.66 1615.38 680.49 1623.63 691.33 C1628.24 697.37 1630.10 654.70 1639.70 642.09 C1642.95 637.82 1653.43 654.23 1655.76 649.12 C1666.28 626.10 1667.07 563.42 1671.82 571.75 C1679.92 585.93 1680.04 693.37 1687.89 705.39 C1692.89 713.07 1694.13 640.34 1703.95 620.99 C1706.98 615.01 1714.23 633.22 1720.01 642.09 C1727.08 652.92 1729.65 670.22 1736.07 670.22 C1742.50 670.22 1743.80 647.56 1752.14 642.09 C1756.65 639.12 1761.77 646.31 1768.20 649.12" fill="none" stroke="rgba(40,167,69,0.86)" stroke-width="2.5" stroke-linejoin="round" stroke-linecap="butt"/>
<path d="M338.60 582.92 C345.03 562.15 347.49 533.69 354.66 531.00 C360.34 528.86 361.45 558.19 370.73 570.86 C374.30 575.74 382.91 578.59 386.79 574.88 C395.76 566.30 393.86 550.79 402.85 540.14 C406.71 535.57 414.57 541.05 418.91 536.85 C427.42 528.62 428.80 508.49 434.98 509.05 C441.65 509.66 443.63 537.24 451.04 539.77 C456.48 541.63 462.00 517.58 467.10 520.02 C474.85 523.73 476.60 541.15 483.17 555.13 C489.45 568.51 492.75 575.13 499.23 588.41 C505.60 601.46 511.19 626.47 515.29 620.96 C524.04 609.21 521.82 561.32 531.36 545.26 C534.67 539.67 540.17 558.99 547.42 566.83 C553.02 572.89 560.49 584.97 563.48 580.00 C573.34 563.61 575.27 508.00 579.54 513.44 C588.12 532.09 585.52 596.34 595.61 649.85 C598.37 664.50 604.01 680.46 611.67 683.86 C616.86 686.16 622.57 672.80 627.73 664.11 C635.42 651.15 635.43 641.93 643.80 629.73 C648.28 623.21 654.94 614.84 659.86 617.30 C667.79 621.27 669.83 646.59 675.92 645.82 C682.68 644.98 685.67 612.99 691.98 613.28 C698.52 613.58 701.18 633.91 708.05 647.29 C714.03 658.93 716.05 671.41 724.11 675.81 C728.90 678.43 737.04 671.58 740.17 664.84 C749.89 643.94 746.99 618.48 756.24 606.69 C759.84 602.10 766.20 624.51 772.30 623.88 C779.05 623.19 780.42 608.47 788.36 603.40 C793.27 600.28 801.31 598.79 804.42 603.40 C814.16 617.81 812.19 632.89 820.49 650.94 C825.04 660.83 828.44 667.62 836.55 673.25 C841.29 676.54 848.49 677.10 852.61 673.25 C861.34 665.10 861.40 654.70 868.68 643.26 C874.25 634.51 877.35 625.06 884.74 622.79 C890.20 621.11 895.02 628.39 900.80 633.39 C907.87 639.51 910.26 650.20 916.87 650.58 C923.11 650.93 928.72 631.63 932.93 635.22 C941.57 642.60 940.67 671.85 948.99 678.01 C953.52 681.36 959.31 667.09 965.05 658.99 C972.17 648.95 972.89 637.71 981.12 632.66 C985.74 629.81 990.89 636.31 997.18 639.24 C1003.74 642.31 1008.66 650.52 1013.24 647.65 C1021.51 642.48 1020.98 624.53 1029.31 619.13 C1033.83 616.19 1041.41 621.35 1045.37 626.81 C1054.26 639.05 1052.65 650.88 1061.43 663.38 C1065.50 669.16 1073.91 676.52 1077.49 672.52 C1086.76 662.19 1083.96 640.44 1093.56 627.54 C1096.81 623.17 1103.20 629.44 1109.62 629.37 C1116.05 629.30 1119.26 627.17 1125.68 627.17 C1132.11 627.17 1136.50 626.21 1141.75 629.37 C1149.35 633.96 1153.29 638.47 1157.81 646.56 C1166.14 661.44 1164.50 674.84 1173.87 686.78 C1177.35 691.22 1187.07 692.24 1189.93 687.51 C1199.92 671.03 1196.12 648.72 1206.00 633.76 C1208.97 629.26 1215.48 637.68 1222.06 638.88 C1228.33 640.02 1232.08 637.89 1238.12 639.61 C1244.93 641.55 1247.45 647.02 1254.19 648.02 C1260.30 648.92 1266.99 640.09 1270.25 644.36 C1279.84 656.92 1277.35 681.09 1286.31 690.07 C1290.20 693.97 1297.82 683.38 1302.38 676.54 C1310.67 664.08 1309.42 652.27 1318.44 641.80 C1322.27 637.35 1328.89 642.05 1334.50 639.24 C1341.74 635.62 1344.07 625.86 1350.56 625.71 C1356.92 625.57 1361.33 632.36 1366.63 638.51 C1374.18 647.28 1374.39 656.59 1382.69 663.01 C1387.24 666.54 1392.50 662.24 1398.75 663.38 C1405.35 664.58 1411.93 673.43 1414.82 668.86 C1424.78 653.10 1422.95 618.42 1430.88 612.55 C1435.80 608.91 1439.60 642.67 1446.94 645.09 C1452.45 646.91 1454.96 628.00 1463.00 623.15 C1467.81 620.25 1473.71 622.60 1479.07 625.71 C1486.56 630.06 1489.98 634.42 1495.13 641.80 C1502.83 652.85 1506.63 676.00 1511.19 671.79 C1519.48 664.15 1517.78 625.34 1527.26 612.18 C1530.63 607.50 1536.22 625.56 1543.32 627.17 C1549.07 628.48 1552.96 622.57 1559.38 619.49 C1565.81 616.42 1570.09 609.92 1575.44 611.81 C1582.94 614.46 1583.72 625.78 1591.51 630.83 C1596.57 634.11 1604.37 627.89 1607.57 632.66 C1617.22 647.05 1614.96 670.94 1623.63 678.74 C1627.81 682.50 1633.94 668.95 1639.70 661.55 C1646.79 652.42 1647.50 643.34 1655.76 637.41 C1660.35 634.12 1667.08 641.64 1671.82 638.51 C1679.93 633.16 1679.82 621.07 1687.89 616.20 C1692.67 613.31 1699.59 615.01 1703.95 619.13 C1712.44 627.15 1713.39 635.70 1720.01 646.56 C1726.24 656.77 1727.86 666.64 1736.07 671.79 C1740.71 674.69 1748.52 671.74 1752.14 666.67 C1761.37 653.75 1761.77 642.75 1768.20 626.81 L1768.20 768.70 L338.60 768.70 Z" fill="rgba(0,123,255,0.1)"/>
<path d="M338.60 582.92 C345.03 562.15 347.49 533.69 354.66 531.00 C360.34 528.86 361.45 558.19 370.73 570.86 C374.30 575.74 382.91 578.59 386.79 574.88 C395.76 566.30 393.86 550.79 402.85 540.14 C406.71 535.57 414.57 541.05 418.91 536.85 C427.42 528.62 428.80 508.49 434.98 509.05 C441.65 509.66 443.63 537.24 451.04 539.77 C456.48 541.63 462.00 517.58 467.10 520.02 C474.85 523.73 476.60 541.15 483.17 555.13 C489.45 568.51 492.75 575.13 499.23 588.41 C505.60 601.46 511.19 626.47 515.29 620.96 C524.04 609.21 521.82 561.32 531.36 545.26 C534.67 539.67 540.17 558.99 547.42 566.83 C553.02 572.89 560.49 584.97 563.48 580.00 C573.34 563.61 575.27 508.00 579.54 513.44 C588.12 532.09 585.52 596.34 595.61 649.85 C598.37 664.50 604.01 680.46 611.67 683.86 C616.86 686.16 622.57 672.80 627.73 664.11 C635.42 651.15 635.43 641.93 643.80 629.73 C648.28 623.21 654.94 614.84 659.86 617.30 C667.79 621.27 669.83 646.59 675.92 645.82 C682.68 644.98 685.67 612.99 691.98 613.28 C698.52 613.58 701.18 633.91 708.05 647.29 C714.03 658.93 716.05 671.41 724.11 675.81 C728.90 678.43 737.04 671.58 740.17 664.84 C749.89 643.94 746.99 618.48 756.24 606.69 C759.84 602.10 766.20 624.51 772.30 623.88 C779.05 623.19 780.42 608.47 788.36 603.40 C793.27 600.28 801.31 598.79 804.42 603.40 C814.16 617.81 812.19 632.89 820.49 650.94 C825.04 660.83 828.44 667.62 836.55 673.25 C841.29 676.54 848.49 677.10 852.61 673.25 C861.34 665.10 861.40 654.70 868.68 643.26 C874.25 634.51 877.35 625.06 884.74 622.79 C890.20 621.11 895.02 628.39 900.80 633.39 C907.87 639.51 910.26 650.20 916.87 650.58 C923.11 650.93 928.72 631.63 932.93 635.22 C941.57 642.60 940.67 671.85 948.99 678.01 C953.52 681.36 959.31 667.09 965.05 658.99 C972.17 648.95 972.89 637.71 981.12 632.66 C985.74 629.81 990.89 636.31 997.18 639.24 C1003.74 642.31 1008.66 650.52 1013.24 647.65 C1021.51 642.48 1020.98 624.53 1029.31 619.13 C1033.83 616.19 1041.41 621.35 1045.37 626.81 C1054.26 639.05 1052.65 650.88 1061.43 663.38 C1065.50 669.16 1073.91 676.52 1077.49 672.52 C1086.76 662.19 1083.96 640.44 1093.56 627.54 C1096.81 623.17 1103.20 629.44 1109.62 629.37 C1116.05 629.30 1119.26 627.17 1125.68 627.17 C1132.11 627.17 1136.50 626.21 1141.75 629.37 C1149.35 633.96 1153.29 638.47 1157.81 646.56 C1166.14 661.44 1164.50 674.84 1173.87 686.78 C1177.35 691.22 1187.07 692.24 1189.93 687.51 C1199.92 671.03 1196.12 648.72 1206.00 633.76 C1208.97 629.26 1215.48 637.68 1222.06 638.88 C1228.33 640.02 1232.08 637.89 1238.12 639.61 C1244.93 641.55 1247.45 647.02 1254.19 648.02 C1260.30 648.92 1266.99 640.09 1270.25 644.36 C1279.84 656.92 1277.35 681.09 1286.31 690.07 C1290.20 693.97 1297.82 683.38 1302.38 676.54 C1310.67 664.08 1309.42 652.27 1318.44 641.80 C1322.27 637.35 1328.89 642.05 1334.50 639.24 C1341.74 635.62 1344.07 625.86 1350.56 625.71 C1356.92 625.57 1361.33 632.36 1366.63 638.51 C1374.18 647.28 1374.39 656.59 1382.69 663.01 C1387.24 666.54 1392.50 662.24 1398.75 663.38 C1405.35 664.58 1411.93 673.43 1414.82 668.86 C1424.78 653.10 1422.95 618.42 1430.88 612.55 C1435.80 608.91 1439.60 642.67 1446.94 645.09 C1452.45 646.91 1454.96 628.00 1463.00 623.15 C1467.81 620.25 1473.71 622.60 1479.07 625.71 C1486.56 630.06 1489.98 634.42 1495.13 641.80 C1502.83 652.85 1506.63 676.00 1511.19 671.79 C1519.48 664.15 1517.78 625.34 1527.26 612.18 C1530.63 607.50 1536.22 625.56 1543.32 627.17 C1549.07 628.48 1552.96 622.57 1559.38 619.49 C1565.81 616.42 1570.09 609.92 1575.44 611.81 C1582.94 614.46 1583.72 625.78 1591.51 630.83 C1596.57 634.11 1604.37 627.89 1607.57 632.66 C1617.22 647.05 1614.96 670.94 1623.63 678.74 C1627.81 682.50 1633.94 668.95 1639.70 661.55 C1646.79 652.42 1647.50 643.34 1655.76 637.41 C1660.35 634.12 1667.08 641.64 1671.82 638.51 C1679.93 633.16 1679.82 621.07 1687.89 616.20 C1692.67 613.31 1699.59 615.01 1703.95 619.13 C1712.44 627.15 1713.39 635.70 1720.01 646.56 C1726.24 656.77 1727.86 666.64 1736.07 671.79 C1740.71 674.69 1748.52 671.74 1752.14 666.67 C1761.37 653.75 1761.77 642.75 1768.20 626.81" fill="none" stroke="rgba(0,123,255,0.85)" stroke-width="2.5" stroke-linejoin="round" stroke-linecap="butt"/>
<text transform="translate(342.60 790.4) rotate(-50)" text-anchor="end">2025-08-27</text>
<text transform="translate(503.23 790.4) rotate(-50)" text-anchor="end">2025-09-06</text>
<text transform="translate(663.86 790.4) rotate(-50)" text-anchor="end">2025-09-16</text>
<text transform="translate(824.49 790.4) rotate(-50)" text-anchor="end">2025-09-26</text>
<text transform="translate(985.12 790.4) rotate(-50)" text-anchor="end">2025-10-06</text>
<text transform="translate(1145.75 790.4) rotate(-50)" text-anchor="end">2025-10-16</text>
<text transform="translate(1306.38 790.4) rotate(-50)" text-anchor="end">2025-10-26</text>
<text transform="translate(1467.00 790.4) rotate(-50)" text-anchor="end">2025-11-05</text>
<text transform="translate(1627.63 790.4) rotate(-50)" text-anchor="end">2025-11-15</text>
<rect x="874.5" y="868.8" width="50" height="15" fill="rgba(0,123,255,0.1)" stroke="rgba(0,123,255,0.85)" stroke-width="2.5"/>
<text x="932" y="880.2">Search Impressions</text>
<rect x="1077.2" y="868.8" width="50" height="15" fill="rgba(40,167,69,0.1)" stroke="rgba(40,167,69,0.86)" stroke-width="2.5"/>
<text x="1134.7" y="880.2">Search Clicks</text>
</svg>
</section>
</body></html>
